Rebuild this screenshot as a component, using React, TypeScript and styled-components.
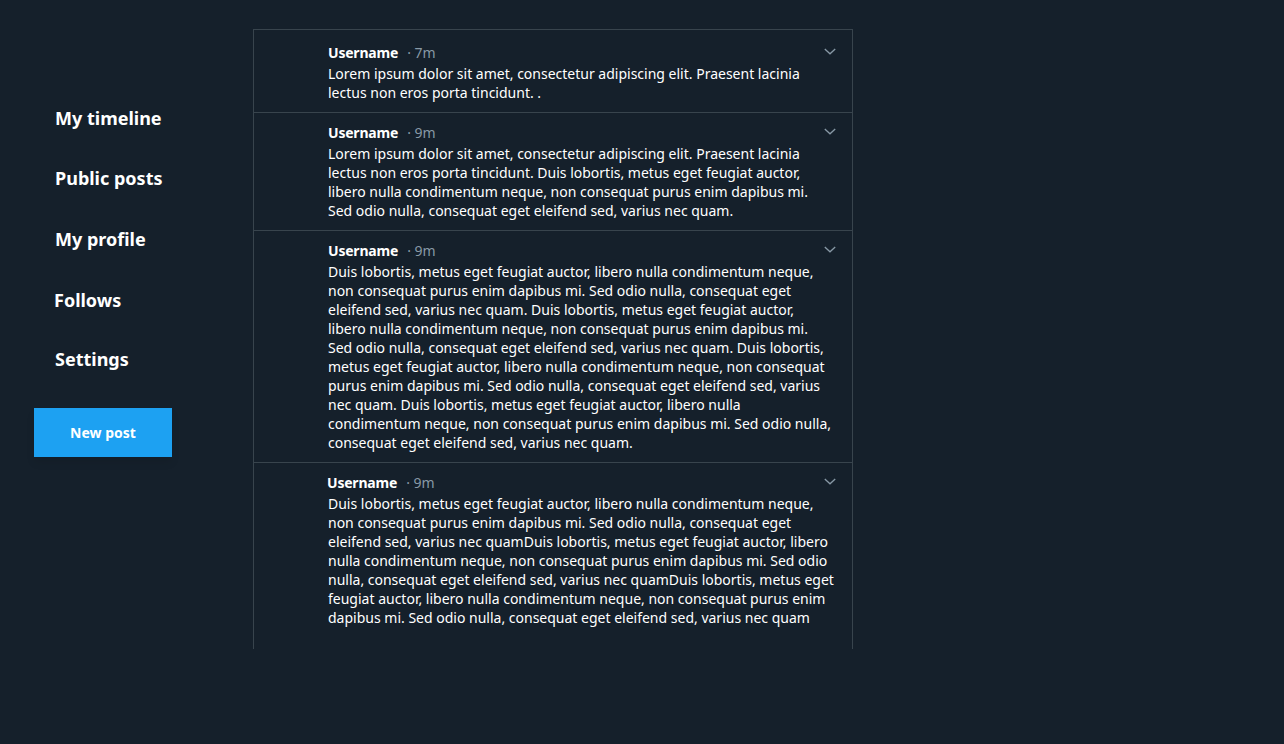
import React from "react";
import styled, { createGlobalStyle } from "styled-components";

const Global = createGlobalStyle`
  html, body { margin: 0; padding: 0; background: #15202b; }
  body { font-family: "Noto Sans", "Open Sans", sans-serif; color: #fff; }
`;

const Page = styled.div`
  display: flex;
  min-height: 744px;
`;

const Sidebar = styled.nav`
  width: 219px;
  padding-left: 34px;
  padding-top: 88px;
  box-sizing: content-box;
  display: flex;
  flex-direction: column;
`;

const NavItem = styled.a<{ $shift?: number; $h?: number }>`
  display: flex;
  align-items: center;
  height: ${(p) => p.$h ?? 60}px;
  padding-left: ${(p) => 21 + (p.$shift ?? 0)}px;
  font-size: 18px;
  font-weight: 700;
  color: #fff;
  text-decoration: none;
`;

const NewPost = styled.button`
  margin-top: 20px;
  width: 138px;
  height: 49px;
  border: none;
  background: #1da1f2;
  color: #fff;
  font-family: inherit;
  font-size: 14px;
  font-weight: 700;
  box-shadow: 0 6px 8px rgba(0, 0, 0, 0.08);
`;

const Feed = styled.main`
  margin-top: 29px;
  width: 598px;
  height: 619px;
  border: 1px solid #38444d;
  border-bottom: none;
  overflow: hidden;
`;

const Post = styled.article<{ $first?: boolean }>`
  padding: ${(p) => (p.$first ? 13 : 10)}px 8px 10px 74px;
  border-bottom: 1px solid #38444d;
  &:last-child { border-bottom: none; }
`;

const Head = styled.div<{ $nudge?: number }>`
  position: relative;
  display: flex;
  align-items: baseline;
  height: 19px;
  margin-left: ${(p) => p.$nudge ?? 0}px;
  font-size: 14px;
  line-height: 19px;
`;

const Name = styled.span`
  font-weight: 700;
  color: #fff;
  letter-spacing: -0.2px;
`;

const Time = styled.span`
  color: #8899a6;
  margin-left: 9px;
`;

const Body = styled.p`
  margin: 2px 0 0;
  font-size: 14px;
  line-height: 19px;
  color: #fff;
`;

const Line = styled.span`
  display: block;
  white-space: nowrap;
`;

const Chevron = styled.svg`
  position: absolute;
  top: 5px;
  right: 8px;
  width: 12px;
  height: 7px;
`;

const posts: { t: string; nudge?: number; lines: string[] }[] = [
  {
    t: "7m",
    lines: [
      "Lorem ipsum dolor sit amet, consectetur adipiscing elit. Praesent lacinia",
      "lectus non eros porta tincidunt. .",
    ],
  },
  {
    t: "9m",
    lines: [
      "Lorem ipsum dolor sit amet, consectetur adipiscing elit. Praesent lacinia",
      "lectus non eros porta tincidunt. Duis lobortis, metus eget feugiat auctor,",
      "libero nulla condimentum neque, non consequat purus enim dapibus mi.",
      "Sed odio nulla, consequat eget eleifend sed, varius nec quam.",
    ],
  },
  {
    t: "9m",
    lines: [
      "Duis lobortis, metus eget feugiat auctor, libero nulla condimentum neque,",
      "non consequat purus enim dapibus mi. Sed odio nulla, consequat eget",
      "eleifend sed, varius nec quam. Duis lobortis, metus eget feugiat auctor,",
      "libero nulla condimentum neque, non consequat purus enim dapibus mi.",
      "Sed odio nulla, consequat eget eleifend sed, varius nec quam. Duis lobortis,",
      "metus eget feugiat auctor, libero nulla condimentum neque, non consequat",
      "purus enim dapibus mi. Sed odio nulla, consequat eget eleifend sed, varius",
      "nec quam. Duis lobortis, metus eget feugiat auctor, libero nulla",
      "condimentum neque, non consequat purus enim dapibus mi. Sed odio nulla,",
      "consequat eget eleifend sed, varius nec quam.",
    ],
  },
  {
    t: "9m",
    nudge: -1,
    lines: [
      "Duis lobortis, metus eget feugiat auctor, libero nulla condimentum neque,",
      "non consequat purus enim dapibus mi. Sed odio nulla, consequat eget",
      "eleifend sed, varius nec quamDuis lobortis, metus eget feugiat auctor, libero",
      "nulla condimentum neque, non consequat purus enim dapibus mi. Sed odio",
      "nulla, consequat eget eleifend sed, varius nec quamDuis lobortis, metus eget",
      "feugiat auctor, libero nulla condimentum neque, non consequat purus enim",
      "dapibus mi. Sed odio nulla, consequat eget eleifend sed, varius nec quam",
    ],
  },
];

const navItems: { label: string; shift?: number; h?: number }[] = [
  { label: "My timeline", h: 60 },
  { label: "Public posts", h: 60 },
  { label: "My profile", h: 62 },
  { label: "Follows", shift: -1, h: 60 },
  { label: "Settings", h: 58 },
];

export default function App() {
  return (
    <>
      <Global />
      <Page>
        <Sidebar>
          {navItems.map((n) => (
            <NavItem key={n.label} href="#" $shift={n.shift} $h={n.h}>
              {n.label}
            </NavItem>
          ))}
          <NewPost>New post</NewPost>
        </Sidebar>
        <Feed>
          {posts.map((p, i) => (
            <Post key={i} $first={i === 0}>
              <Head $nudge={p.nudge}>
                <Name>Username</Name>
                <Time>· {p.t}</Time>
                <Chevron viewBox="0 0 12 7" fill="none" stroke="#8899a6" strokeWidth="1.3">
                  <path d="M0.8 1 L6 5.8 L11.2 1" />
                </Chevron>
              </Head>
              <Body>
                {p.lines.map((l, j) => (
                  <Line key={j}>{l}</Line>
                ))}
              </Body>
            </Post>
          ))}
        </Feed>
      </Page>
    </>
  );
}
